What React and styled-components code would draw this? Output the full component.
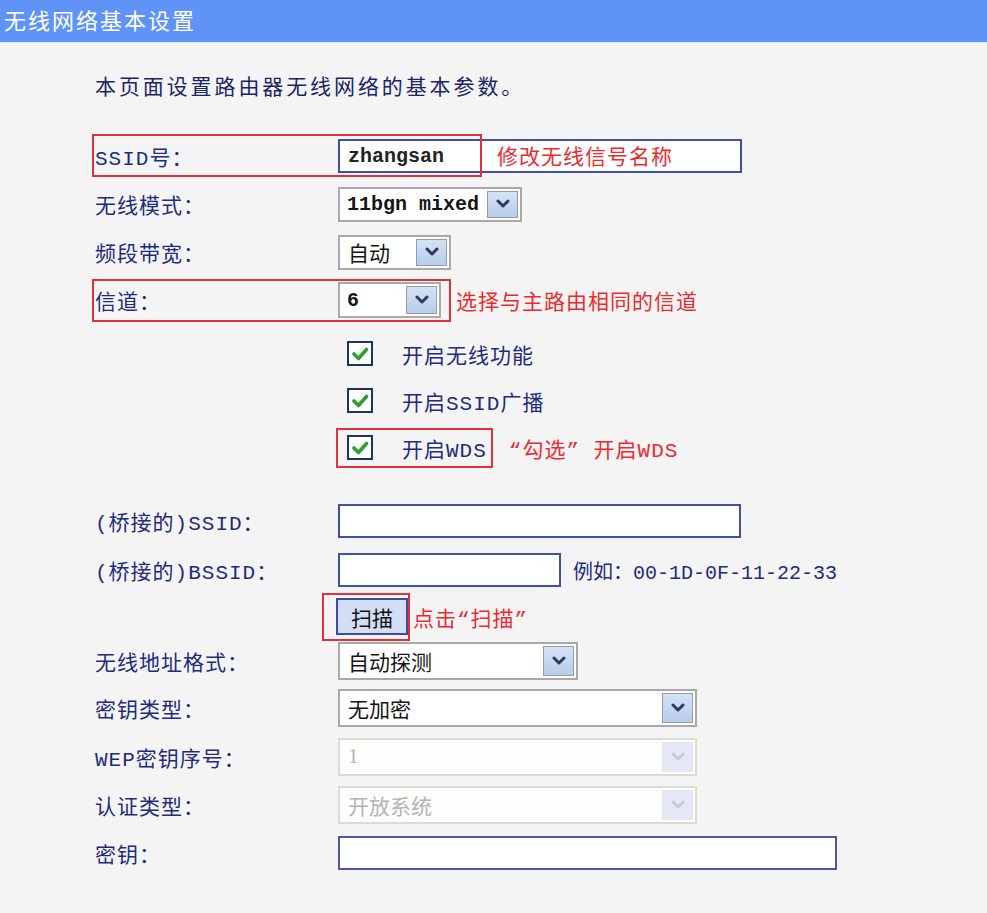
import React from "react";
import styled, { createGlobalStyle } from "styled-components";

const Global = createGlobalStyle`
  html, body { margin: 0; padding: 0; background: #f4f4f4; }
  body { font-family: "Noto Sans CJK SC", "Noto Sans", sans-serif; }
  * { box-sizing: border-box; }
`;

const MIXED = `"Liberation Mono", "Noto Sans CJK SC", monospace`;

const Page = styled.div`
  width: 987px;
  min-height: 913px;
  background: #f4f4f4;
`;

const Header = styled.div`
  height: 43px;
  background: #5f93f5;
  color: #fff;
  font-size: 22px;
  line-height: 38px;
  padding-left: 4px;
  letter-spacing: 2px;
  border-bottom: 1px solid #e4eafa;
`;

const Content = styled.div`
  padding-left: 95px;
`;

const Intro = styled.div`
  height: 84px;
  display: flex;
  align-items: center;
  font-size: 21px;
  letter-spacing: 2.9px;
  color: #1b2566;
  margin-bottom: 5px;
`;

const Row = styled.div`
  position: relative;
  display: flex;
  align-items: center;
  height: ${(p) => p.$h || 48}px;
  margin-top: ${(p) => p.$mt || 0}px;
`;

const Label = styled.div`
  width: 243px;
  flex: none;
  font-family: ${MIXED};
  font-size: 21px;
  letter-spacing: 1px;
  color: #1e2c7c;
  white-space: nowrap;
`;

const TextInput = styled.div`
  width: ${(p) => p.$w}px;
  height: ${(p) => p.$h || 34}px;
  background: #fff;
  border: 2px solid ${(p) => p.$c || "#3f50a6"};
  display: flex;
  align-items: center;
  padding-left: 8px;
  font-family: "Liberation Mono", monospace;
  font-size: 20px;
  font-weight: bold;
  color: #222;
`;

const SelectBox = styled.div`
  width: ${(p) => p.$w}px;
  height: ${(p) => p.$h || 36}px;
  background: ${(p) => (p.$disabled ? "#fdfdfb" : "#fff")};
  border: 2px solid ${(p) => (p.$disabled ? "#dcdcd4" : "#a9a9a9")};
  display: flex;
  align-items: center;
  padding: 2px;
  flex: none;
`;

const SelectValue = styled.div`
  flex: 1;
  padding-left: ${(p) => (p.$mono ? 5 : 6)}px;
  font-family: ${(p) =>
    p.$mono
      ? `"Liberation Mono", monospace`
      : p.$serif
      ? `"Liberation Serif", serif`
      : `"Noto Sans CJK SC", sans-serif`};
  font-size: ${(p) => (p.$mono ? 20 : 21)}px;
  font-weight: ${(p) => (p.$mono ? "bold" : "normal")};
  color: ${(p) => (p.$disabled ? "#b4b4b4" : "#141414")};
  white-space: nowrap;
  overflow: hidden;
`;

const DropButton = styled.div`
  width: 31px;
  height: 100%;
  flex: none;
  display: flex;
  align-items: center;
  justify-content: center;
  background: ${(p) =>
    p.$disabled ? "#e6e8f8" : "linear-gradient(#d5e2f4, #b8cde9)"};
  border: 1px solid ${(p) => (p.$disabled ? "#e2e4f2" : "#8d9cb8")};
`;

const Annotation = styled.span`
  color: #ec2a2f;
  font-family: ${MIXED};
  font-size: 21px;
  letter-spacing: 1px;
  margin-left: ${(p) => p.$ml || 0}px;
  white-space: nowrap;
`;

const OverlayNote = styled(Annotation)`
  position: absolute;
  left: ${(p) => p.$left}px;
  top: 50%;
  transform: translateY(-54%);
`;

const Highlight = styled.div`
  position: absolute;
  left: ${(p) => p.$left}px;
  top: ${(p) => p.$top}px;
  width: ${(p) => p.$w}px;
  height: ${(p) => p.$h}px;
  border: 2px solid #e0303a;
  pointer-events: none;
`;

const CheckGroup = styled.div`
  display: flex;
  align-items: center;
  height: 40px;
  margin-left: -2px;
  padding: 0 4px 0 9px;
  border: 2px solid ${(p) => (p.$mark ? "#e0303a" : "transparent")};
  gap: 29px;
`;

const CheckBox = styled.div`
  width: 26px;
  height: 25px;
  background: #fff;
  border: 2px solid #24305e;
  display: flex;
  align-items: center;
  justify-content: center;
`;

const CheckLabel = styled.span`
  font-family: ${MIXED};
  font-size: 21px;
  color: #1e2c7c;
  letter-spacing: 1px;
`;

const ScanWrap = styled.div`
  display: flex;
  align-items: center;
  margin-left: -16px;
  padding: 3px 0 3px 12px;
  border: 2px solid #e0303a;
  height: 48px;
`;

const ScanButton = styled.button`
  width: 72px;
  height: 37px;
  background: #d3ddf6;
  border: 2px solid #3a4e9c;
  font-family: "Noto Sans CJK SC", sans-serif;
  font-size: 21px;
  color: #111;
  padding: 0;
  margin: 0;
`;

const Example = styled.span`
  margin-left: 12px;
  font-family: ${MIXED};
  font-size: 20px;
  color: #1e2c7c;
  white-space: nowrap;
`;

const Spacer = styled.div`
  width: 243px;
  flex: none;
`;

const Chevron = ({ disabled }) => (
  <svg width="14" height="10" viewBox="0 0 14 10">
    <polyline
      points="2,2 7,7 12,2"
      fill="none"
      stroke={disabled ? "#c9cad8" : "#2d3a63"}
      strokeWidth="3"
      strokeLinecap="round"
      strokeLinejoin="round"
    />
  </svg>
);

const Check = () => (
  <svg width="18" height="16" viewBox="0 0 18 16">
    <polyline
      points="3,8 7.5,12.5 15.5,3.5"
      fill="none"
      stroke="#2c9e34"
      strokeWidth="3.6"
      strokeLinecap="round"
      strokeLinejoin="round"
    />
  </svg>
);

const Select = ({ w, h, value, mono, serif, disabled }) => (
  <SelectBox $w={w} $h={h} $disabled={disabled}>
    <SelectValue $mono={mono} $serif={serif} $disabled={disabled}>
      {value}
    </SelectValue>
    <DropButton $disabled={disabled}>
      <Chevron disabled={disabled} />
    </DropButton>
  </SelectBox>
);

export default function App() {
  return (
    <Page>
      <Global />
      <Header>无线网络基本设置</Header>
      <Content>
        <Intro>本页面设置路由器无线网络的基本参数。</Intro>

        <Row>
          <Label>SSID号：</Label>
          <TextInput $w={404}>zhangsan</TextInput>
          <OverlayNote $left={402}>修改无线信号名称</OverlayNote>
          <Highlight $left={-3} $top={2} $w={390} $h={43} />
        </Row>
        <Row>
          <Label>无线模式：</Label>
          <Select w={184} h={35} value="11bgn mixed" mono />
        </Row>
        <Row>
          <Label>频段带宽：</Label>
          <Select w={113} h={35} value="自动" />
        </Row>
        <Row>
          <Label>信道：</Label>
          <Select w={103} h={36} value="6" mono />
          <Annotation $ml={15}>选择与主路由相同的信道</Annotation>
          <Highlight $left={-3} $top={3} $w={359} $h={43} />
        </Row>

        <Row $h={47} $mt={6}>
          <Spacer />
          <CheckGroup>
            <CheckBox><Check /></CheckBox>
            <CheckLabel>开启无线功能</CheckLabel>
          </CheckGroup>
        </Row>
        <Row $h={47}>
          <Spacer />
          <CheckGroup>
            <CheckBox><Check /></CheckBox>
            <CheckLabel>开启SSID广播</CheckLabel>
          </CheckGroup>
        </Row>
        <Row $h={47}>
          <Spacer />
          <CheckGroup $mark>
            <CheckBox><Check /></CheckBox>
            <CheckLabel>开启WDS</CheckLabel>
          </CheckGroup>
          <Annotation $ml={16}>“勾选” 开启WDS</Annotation>
        </Row>

        <Row $mt={26}>
          <Label>(桥接的)SSID：</Label>
          <TextInput $w={403} />
        </Row>
        <Row $h={50}>
          <Label>(桥接的)BSSID：</Label>
          <TextInput $w={223} />
          <Example>例如：00-1D-0F-11-22-33</Example>
        </Row>
        <Row $h={43}>
          <Spacer />
          <ScanWrap>
            <ScanButton>扫描</ScanButton>
          </ScanWrap>
          <Annotation $ml={3}>点击“扫描”</Annotation>
        </Row>
        <Row $h={46}>
          <Label>无线地址格式：</Label>
          <Select w={240} h={38} value="自动探测" />
        </Row>
        <Row>
          <Label>密钥类型：</Label>
          <Select w={359} h={38} value="无加密" />
        </Row>
        <Row $h={49}>
          <Label>WEP密钥序号：</Label>
          <Select w={359} h={38} value="1" serif disabled />
        </Row>
        <Row>
          <Label>认证类型：</Label>
          <Select w={359} h={38} value="开放系统" disabled />
        </Row>
        <Row>
          <Label>密钥：</Label>
          <TextInput $w={499} $c="#4d57a3" />
        </Row>
      </Content>
    </Page>
  );
}
